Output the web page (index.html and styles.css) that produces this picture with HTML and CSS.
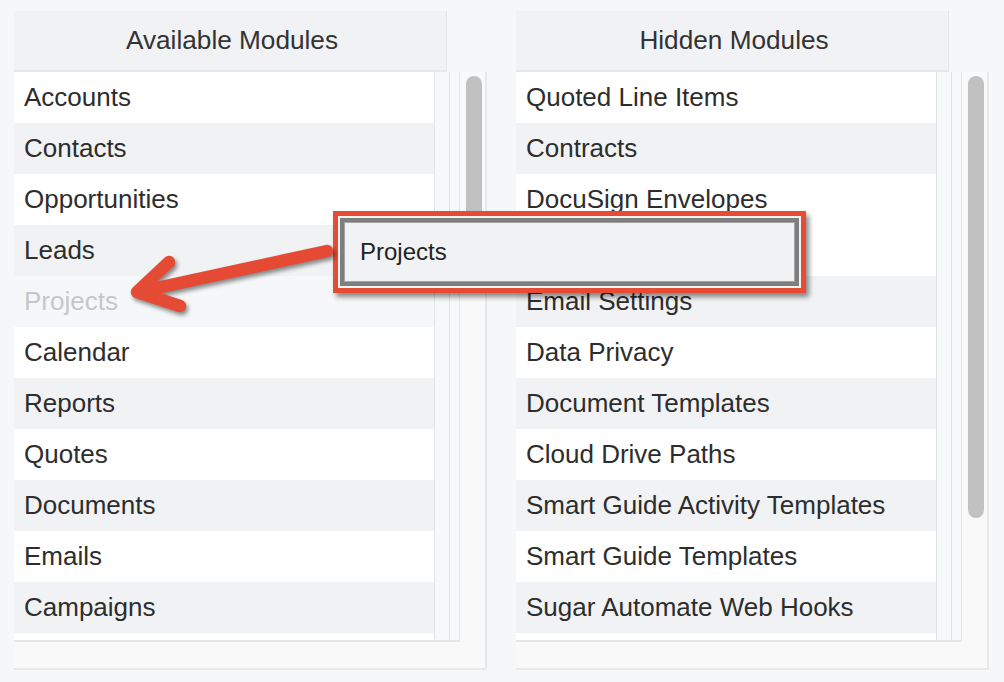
FILE: index.html
```html
<!DOCTYPE html>
<html lang="en">
<head>
<meta charset="utf-8">
<title>Modules</title>
<link rel="stylesheet" href="styles.css">
</head>
<body>
<div class="wrap">
  <section class="col">
    <div class="head">Available Modules</div>
    <div class="body">
      <div class="listbox">
        <ul class="list">
          <li>Accounts</li>
          <li class="g">Contacts</li>
          <li>Opportunities</li>
          <li class="g">Leads</li>
          <li class="ph">Projects</li>
          <li>Calendar</li>
          <li class="g">Reports</li>
          <li>Quotes</li>
          <li class="g">Documents</li>
          <li>Emails</li>
          <li class="g">Campaigns</li>
          <li>&nbsp;</li>
        </ul>
        <div class="strip s1"></div>
        <div class="strip s2"></div>
      </div>
      <div class="track"><div class="thumb short"></div></div>
    </div>
  </section>
  <section class="col">
    <div class="head">Hidden Modules</div>
    <div class="body">
      <div class="listbox">
        <ul class="list">
          <li>Quoted Line Items</li>
          <li class="g">Contracts</li>
          <li>DocuSign Envelopes</li>
          <li>&nbsp;</li>
          <li class="g">Email Settings</li>
          <li>Data Privacy</li>
          <li class="g">Document Templates</li>
          <li>Cloud Drive Paths</li>
          <li class="g">Smart Guide Activity Templates</li>
          <li>Smart Guide Templates</li>
          <li class="g">Sugar Automate Web Hooks</li>
          <li>&nbsp;</li>
        </ul>
        <div class="strip s1"></div>
        <div class="strip s2"></div>
      </div>
      <div class="track"><div class="thumb long"></div></div>
    </div>
  </section>
</div>

<div class="drag">
  <div class="drag-inner">Projects</div>
</div>

<svg class="arrow" width="1004" height="682" viewBox="0 0 1004 682" aria-hidden="true">
  <g fill="none" stroke="#e54b34" stroke-width="12.5" stroke-linecap="round" stroke-linejoin="round">
    <path d="M327 251 L138 292"/>
    <path d="M169 262 L137 292 L180 306"/>
  </g>
</svg>
</body>
</html>
```

FILE: styles.css
```css
* { box-sizing: border-box; }

html, body {
  margin: 0;
  padding: 0;
}

body {
  position: relative;
  width: 1004px;
  height: 682px;
  overflow: hidden;
  background: #f6f7f9;
  font-family: "Liberation Sans", Arial, sans-serif;
  color: #2d2d2d;
}

.wrap {
  display: flex;
  gap: 29px;
  padding: 11px 0 0 14px;
}

.col {
  width: 473px;
  display: flex;
  flex-direction: column;
}

.head {
  width: 433px;
  height: 61px;
  line-height: 59px;
  padding-left: 4px;
  text-align: center;
  font-size: 26.2px;
  color: #333;
  background: #f1f2f4;
  border-right: 1px solid #e2e6e7;
  border-bottom: 2px solid #e3e8e8;
}

.body {
  display: flex;
  height: 598px;
  background: #f9f9f9;
  border-right: 2px solid #e8e8e8;
  border-bottom: 2px solid #e8e8e8;
}

.listbox {
  display: flex;
  width: 446px;
  height: 570px;
  background: #fff;
  border-right: 1px solid #e3e6e6;
  border-bottom: 2px solid #e6e8e8;
  overflow: hidden;
}

.list {
  list-style: none;
  margin: 0;
  padding: 0;
  width: 420px;
  flex: none;
}

.list li {
  height: 51px;
  line-height: 51px;
  padding-left: 10px;
  font-size: 26px;
  white-space: nowrap;
  background: #fff;
}

.list li.g {
  background: #f1f2f4;
}

.list li.ph {
  background: #f6f7f9;
  color: #c5c7c9;
}

.strip {
  flex: none;
  background: #f6f8f9;
  border-left: 1px solid #dde4e4;
}

.s1 { width: 15px; }
.s2 { width: 10px; }

.track {
  flex: 1;
  padding: 4px 0 0 6px;
}

.thumb {
  width: 16px;
  background: #c1c1c1;
  border-radius: 8px;
}

.thumb.short { height: 165px; }
.thumb.long { height: 442px; }

.drag {
  position: absolute;
  left: 333px;
  top: 211px;
  width: 473px;
  height: 82px;
  border: 5px solid #e64c34;
  padding: 2px;
  background: #f4f4f4;
  box-shadow: 3px 4px 5px rgba(0, 0, 0, 0.45);
}

.drag-inner {
  height: 100%;
  border: 4px solid #7e7e7e;
  box-shadow: inset 0 0 0 1px #a3a3a3;
  background: #f1f2f4;
  padding-left: 16px;
  display: flex;
  align-items: center;
  font-size: 24px;
  color: #222;
}

.arrow {
  position: absolute;
  left: 0;
  top: 0;
  pointer-events: none;
  filter: drop-shadow(2px 3px 2px rgba(0, 0, 0, 0.45));
}
```
